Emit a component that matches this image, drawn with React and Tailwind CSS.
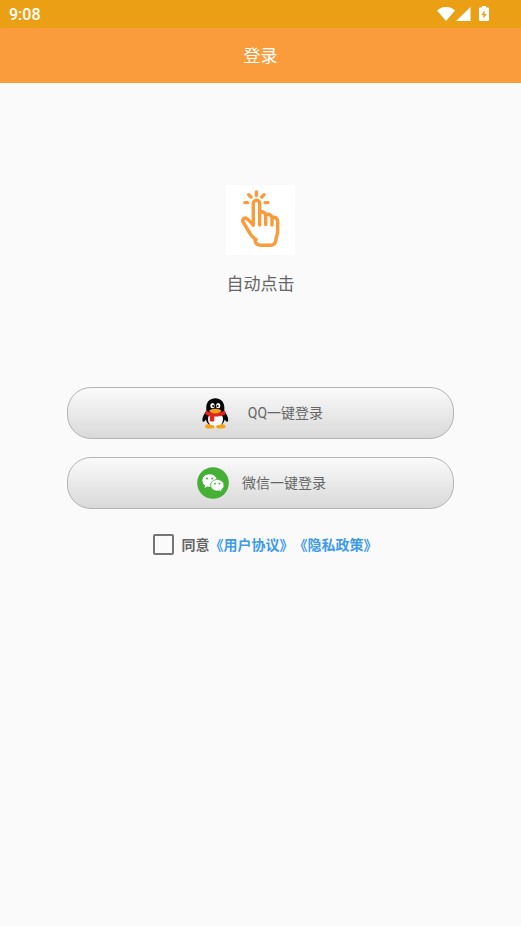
import { useState } from "react";

function StatusIcons() {
  return (
    <div className="flex items-center text-white">
      <svg width="18" height="16" viewBox="0 0 18 16" fill="currentColor">
        <path d="M0 4.400C2.500 2.200 5.600 1 9 1s6.500 1.200 9 3.400L9 15z" />
      </svg>
      <svg width="16" height="16" viewBox="0 0 16 16" fill="currentColor">
        <path d="M15.500 1v14H1z" />
      </svg>
      <svg
        className="ml-2"
        width="10"
        height="16"
        viewBox="0 0 10 16"
        fill="currentColor"
      >
        <path
          fillRule="evenodd"
          d="M3 0h4v1.500h2q1 0 1 1V14q0 1-1 1H1q-1 0-1-1V2.500q0-1 1-1h2zM5.600 4.500L2.300 9h2.100v3.500L7.700 8H5.600z"
        />
      </svg>
    </div>
  );
}

function TapLogo() {
  return (
    <svg
      className="bg-white"
      width="69"
      height="70"
      viewBox="0 0 69 70"
      fill="none"
      stroke="#f89b38"
      strokeWidth="3.400"
      strokeLinecap="round"
      strokeLinejoin="round"
    >
      <path d="M30.400 7v3.500M22.800 9.800l2.200 2.200M38 9.800l-2.200 2.200M18.800 17.600h2.900M39.100 17.600h2.900" />
      <path d="M27.300 40V18.500a3.200 3.200 0 0 1 6.400 0V40" />
      <path d="M33.700 27c3.600-.8 6 .8 6 4v8.500M39.700 29.500c4-.8 6.300.8 6.300 4v6.500M46 32.300c3.800-.6 5.700 1.200 5.700 4.700v8.500c0 4-1.200 5.500-1.800 9.500-.5 3.500-2 5.200-5 5.200H35c-3.500 0-5.800-1.700-6-5" />
      <path d="M27.300 40l-5.500-5.800c-3-2.600-6.500 0-4.300 3.500l6.500 10.800c1.500 2.700 3.500 4.500 6 6" />
    </svg>
  );
}

function QQIcon() {
  return (
    <svg width="32" height="32" viewBox="0.700 -0.400 32 32">
      <path
        fill="#050505"
        d="M16 .8c-5.300 0-9 3.800-9 9v3.700c-1.900 2.500-3.900 6-3.900 8.700 0 2 .5 2.400 1 2.200.9-.2 1.800-1.200 2.500-2.400.9 4.300 4.400 7 9.400 7s8.500-2.700 9.400-7c.7 1.200 1.600 2.200 2.500 2.400.5.200 1-.2 1-2.200 0-2.700-2-6.200-3.900-8.700V9.800c0-5.200-3.700-9-9-9z"
      />
      <ellipse cx="16.200" cy="22" rx="7.500" ry="7.800" fill="#fff" />
      <path
        fill="#f9a01b"
        d="M9 26.500c-2.500.5-3.500 1.600-3.200 3 .3 1.300 2 1.700 4.700 1.700s4.800-.4 4.800-1.800c0-1-1-1.500-2.500-1.700-1.400-.3-2.700-.7-3.800-1.200zM23 26.500c2.500.5 3.500 1.600 3.200 3-.3 1.300-2 1.700-4.700 1.700s-4.800-.4-4.800-1.800c0-1 1-1.500 2.500-1.700 1.400-.3 2.700-.7 3.800-1.200z"
      />
      <path
        fill="#e0261c"
        d="M6.700 13.200c5.500 3.300 13 3.300 18.700 0l1 3.400c-3.300 2-7.200 2.700-11.400 2.600v4.600c-1.400.5-3 .4-4.500 0v-5.200c-1.700-.5-3.400-1.100-4.800-2z"
      />
      <ellipse cx="13.200" cy="8.300" rx="2.200" ry="2.600" fill="#fff" />
      <ellipse cx="18.900" cy="8.300" rx="2.200" ry="2.600" fill="#fff" />
      <circle cx="13.900" cy="8.500" r="1" fill="#050505" />
      <circle cx="18.300" cy="8.500" r="1" fill="#050505" />
      <path
        fill="#f9a01b"
        d="M9.800 13.200c1.600-1.300 3.800-1.800 6.200-1.800s4.600.5 6.200 1.800c-1 1.800-3.400 2.900-6.200 2.900s-5.200-1.100-6.200-2.900z"
      />
    </svg>
  );
}

function WechatIcon() {
  return (
    <svg width="32" height="32" viewBox="0 0 32 32">
      <circle cx="16" cy="16" r="15.800" fill="#45b035" />
      <path
        fill="#fff"
        d="M12.600 7.200c-4 0-7.200 2.800-7.200 6.300 0 2 1 3.700 2.700 4.900l-.6 2.500 2.700-1.500c.8.200 1.600.3 2.400.3 4 0 7.200-2.700 7.200-6.200s-3.200-6.300-7.200-6.300z"
      />
      <path
        fill="#fff"
        stroke="#45b035"
        strokeWidth=".8"
        d="M20.300 12.500c-3.700 0-6.700 2.500-6.700 5.700s3 5.800 6.700 5.800c.8 0 1.500-.1 2.200-.3l2.500 1.400-.6-2.200c1.600-1.100 2.600-2.800 2.600-4.700 0-3.200-3-5.700-6.700-5.700z"
      />
      <g fill="#45b035">
        <circle cx="10" cy="11.500" r="1" />
        <circle cx="15.200" cy="11.500" r="1" />
        <circle cx="18" cy="16.700" r=".9" />
        <circle cx="22.500" cy="16.700" r=".9" />
      </g>
    </svg>
  );
}

const buttonClass =
  "flex h-[52px] w-full items-center justify-center rounded-3xl border border-[#b4b4b4] bg-linear-to-b from-[#fafafa] to-[#d9d9d9] pl-0.5 text-sm text-[#666]";

export default function App() {
  const [agreed, setAgreed] = useState(false);

  return (
    <div className="min-h-screen bg-[#fafafa] font-[Roboto,'Noto_Sans_CJK_SC',sans-serif]">
      <div className="flex h-7 items-center justify-between bg-[#eb9f14] pr-8 pl-[9px]">
        <span className="pt-0.5 text-base font-medium text-white">9:08</span>
        <StatusIcons />
      </div>
      <header className="flex h-[55px] items-center justify-center bg-[#fa9c3b] pt-0.5">
        <h1 className="text-[17px] text-white">登录</h1>
      </header>

      <main className="flex flex-col items-center px-[67px] pt-[102px]">
        <TapLogo />
        <p className="mt-[17px] text-[17px] leading-6 text-[#666]">自动点击</p>

        <div className="mt-[91px] flex w-full flex-col gap-[18px]">
          <button type="button" className={`${buttonClass} gap-4`}>
            <QQIcon />
            QQ一键登录
          </button>
          <button type="button" className={`${buttonClass} gap-[13px]`}>
            <WechatIcon />
            微信一键登录
          </button>
        </div>

        <div className="mt-[25px] flex items-center pl-[9px] text-sm font-bold whitespace-nowrap">
          <input
            id="agree"
            type="checkbox"
            checked={agreed}
            onChange={(e) => setAgreed(e.target.checked)}
            className="mr-2 size-[21px] appearance-none rounded-[2px] border-2 border-[#757575] checked:bg-[#757575]"
          />
          <label htmlFor="agree" className="text-[#666]">
            同意
          </label>
          <a href="#terms" className="text-[#3f9bea]">
            《用户协议》
          </a>
          <a href="#privacy" className="text-[#3f9bea]">
            《隐私政策》
          </a>
        </div>
      </main>
    </div>
  );
}
